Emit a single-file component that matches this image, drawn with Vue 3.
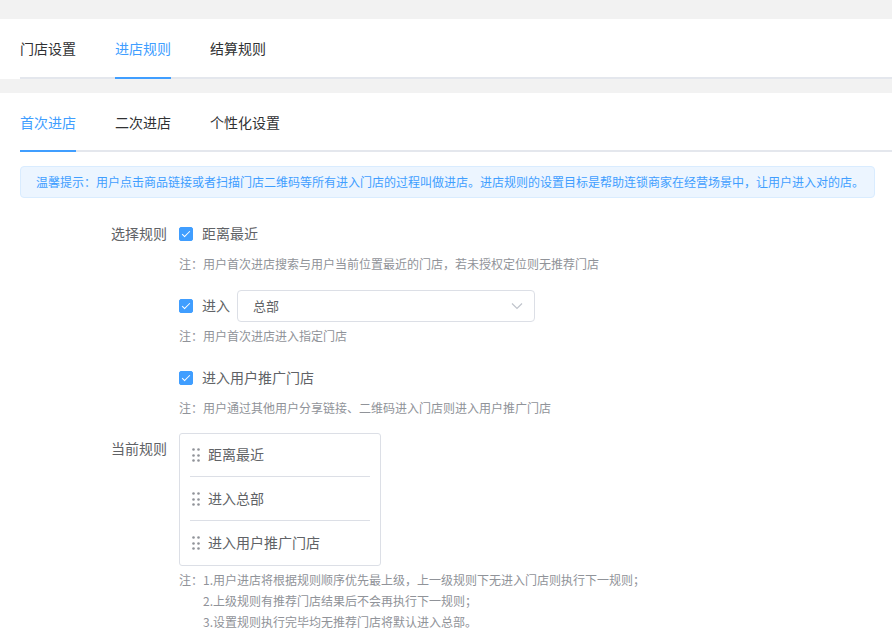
<template>
  <div class="page">
    <nav class="panel">
      <div class="tabs">
        <button v-for="tab in mainTabs" :key="tab" type="button" class="tab" :class="{ active: tab === activeMain }" @click="activeMain = tab">{{ tab }}</button>
      </div>
    </nav>

    <main class="panel content">
      <div class="tabs sub-tabs">
        <button v-for="tab in subTabs" :key="tab" type="button" class="tab" :class="{ active: tab === activeSub }" @click="activeSub = tab">{{ tab }}</button>
      </div>

      <p class="tips">温馨提示：用户点击商品链接或者扫描门店二维码等所有进入门店的过程叫做进店。进店规则的设置目标是帮助连锁商家在经营场景中，让用户进入对的店。</p>

      <form class="form" @submit.prevent>
        <div class="form-label">选择规则</div>
        <div class="rules">
          <div class="rule">
            <div class="rule-line">
              <input id="nearest" v-model="checked.nearest" type="checkbox" class="checkbox" />
              <label for="nearest" class="rule-name">距离最近</label>
            </div>
            <p class="note">注：用户首次进店搜索与用户当前位置最近的门店，若未授权定位则无推荐门店</p>
          </div>
          <div class="rule">
            <div class="rule-line">
              <input id="enter" v-model="checked.enter" type="checkbox" class="checkbox" />
              <label for="enter" class="rule-name">进入</label>
              <div class="select-wrap">
                <select v-model="store" class="select" aria-label="进入">
                  <option v-for="item in stores" :key="item">{{ item }}</option>
                </select>
                <svg class="arrow" viewBox="0 0 12 8" width="12" height="8" fill="none" stroke="#c0c4cc" stroke-width="1.2">
                  <path d="M1 1.5L6 6.5L11 1.5" />
                </svg>
              </div>
            </div>
            <p class="note">注：用户首次进店进入指定门店</p>
          </div>
          <div class="rule">
            <div class="rule-line">
              <input id="promote" v-model="checked.promote" type="checkbox" class="checkbox" />
              <label for="promote" class="rule-name">进入用户推广门店</label>
            </div>
            <p class="note">注：用户通过其他用户分享链接、二维码进入门店则进入用户推广门店</p>
          </div>
        </div>

        <div class="form-label">当前规则</div>
        <div>
          <ul class="sort-list">
            <li v-for="rule in currentRules" :key="rule" draggable="true">
              <svg class="drag" viewBox="0 0 8 14" width="8" height="14" fill="#909399">
                <circle cx="1.5" cy="1.5" r="1.3" />
                <circle cx="6.5" cy="1.5" r="1.3" />
                <circle cx="1.5" cy="7.5" r="1.3" />
                <circle cx="6.5" cy="7.5" r="1.3" />
                <circle cx="1.5" cy="12.5" r="1.3" />
                <circle cx="6.5" cy="12.5" r="1.3" />
              </svg>
              <span class="rule-name">{{ rule }}</span>
            </li>
          </ul>
          <div class="explain">
            <span>注：</span>
            <div>
              <p>1.用户进店将根据规则顺序优先最上级，上一级规则下无进入门店则执行下一规则；</p>
              <p>2.上级规则有推荐门店结果后不会再执行下一规则；</p>
              <p>3.设置规则执行完毕均无推荐门店将默认进入总部。</p>
            </div>
          </div>
        </div>
      </form>
    </main>
  </div>
</template>

<script setup>
import { computed, reactive, ref } from 'vue';

const mainTabs = ['门店设置', '进店规则', '结算规则'];
const subTabs = ['首次进店', '二次进店', '个性化设置'];
const activeMain = ref('进店规则');
const activeSub = ref('首次进店');

const stores = ['总部'];
const store = ref('总部');
const checked = reactive({ nearest: true, enter: true, promote: true });

const currentRules = computed(() => {
  const list = [];
  if (checked.nearest) list.push('距离最近');
  if (checked.enter) list.push(`进入${store.value}`);
  if (checked.promote) list.push('进入用户推广门店');
  return list;
});
</script>

<style>
body {
  margin: 0;
  background: #f2f2f2;
}
</style>

<style scoped>
.page {
  display: flex;
  flex-direction: column;
  gap: 14px;
  box-sizing: border-box;
  min-height: 100vh;
  padding-top: 19px;
  color: #606266;
  font-family: "Noto Sans CJK SC", "Microsoft YaHei", sans-serif;
  font-size: 14px;
}
p,
ul {
  margin: 0;
  padding: 0;
}
.panel {
  padding-left: 20px;
  background: #fff;
}
.content {
  flex: 1;
}
.tabs {
  display: flex;
  gap: 39px;
  height: 60px;
  box-shadow: inset 0 -2px #e4e7ed;
}
.sub-tabs {
  height: 59px;
}
.tab {
  padding: 0 0 2px;
  border: 0;
  background: none;
  color: #303133;
  font: inherit;
  cursor: pointer;
}
.tab.active {
  color: #409eff;
  box-shadow: inset 0 -2px #409eff;
}
.tips {
  margin: 14px 17px 0 0;
  padding: 0 8px 0 15px;
  border: 1px solid #d9ecff;
  border-radius: 4px;
  background: #ecf5ff;
  color: #409eff;
  font-size: 12px;
  line-height: 30px;
}
.form {
  display: grid;
  grid-template-columns: 147px 1fr;
  gap: 11px 12px;
  margin-top: 20px;
}
.form-label {
  line-height: 30px;
  text-align: right;
}
.rules {
  display: flex;
  flex-direction: column;
  gap: 12px;
}
.rule-line {
  display: flex;
  align-items: center;
  height: 32px;
}
.rule-name {
  padding-bottom: 2px;
}
.checkbox {
  position: relative;
  width: 14px;
  height: 14px;
  margin: 0 9px 0 0;
  border: 1px solid #dcdfe6;
  border-radius: 2px;
  background: #fff;
  appearance: none;
  cursor: pointer;
}
.checkbox:checked {
  border-color: #409eff;
  background: #409eff;
}
.checkbox:checked::after {
  content: '';
  position: absolute;
  top: 1px;
  left: 4px;
  width: 3px;
  height: 7px;
  border: solid #fff;
  border-width: 0 1px 1px 0;
  transform: rotate(45deg);
}
.select-wrap {
  position: relative;
  flex: 0 1 298px;
  margin-left: 7px;
}
.select {
  display: block;
  width: 100%;
  height: 32px;
  padding: 0 30px 2px 15px;
  border: 1px solid #dcdfe6;
  border-radius: 4px;
  background: #fff;
  color: #606266;
  font-family: inherit;
  font-size: 13px;
  appearance: none;
}
.arrow {
  position: absolute;
  top: 12px;
  right: 12px;
  pointer-events: none;
}
.note {
  color: #909399;
  font-size: 12px;
  line-height: 28px;
}
.sort-list {
  box-sizing: border-box;
  max-width: 202px;
  padding: 0 10px;
  border: 1px solid #dcdfe6;
  border-radius: 3px;
  list-style: none;
}
.sort-list li {
  display: flex;
  align-items: center;
  gap: 8px;
  box-sizing: border-box;
  height: 43px;
  padding-left: 2px;
  border-bottom: 1px solid #dcdfe6;
  cursor: move;
}
.sort-list li + li {
  height: 44px;
}
.sort-list li:last-child {
  border-bottom: 0;
}
.explain {
  display: flex;
  margin-top: 3px;
  color: #909399;
  font-size: 12px;
  line-height: 21px;
}
</style>
